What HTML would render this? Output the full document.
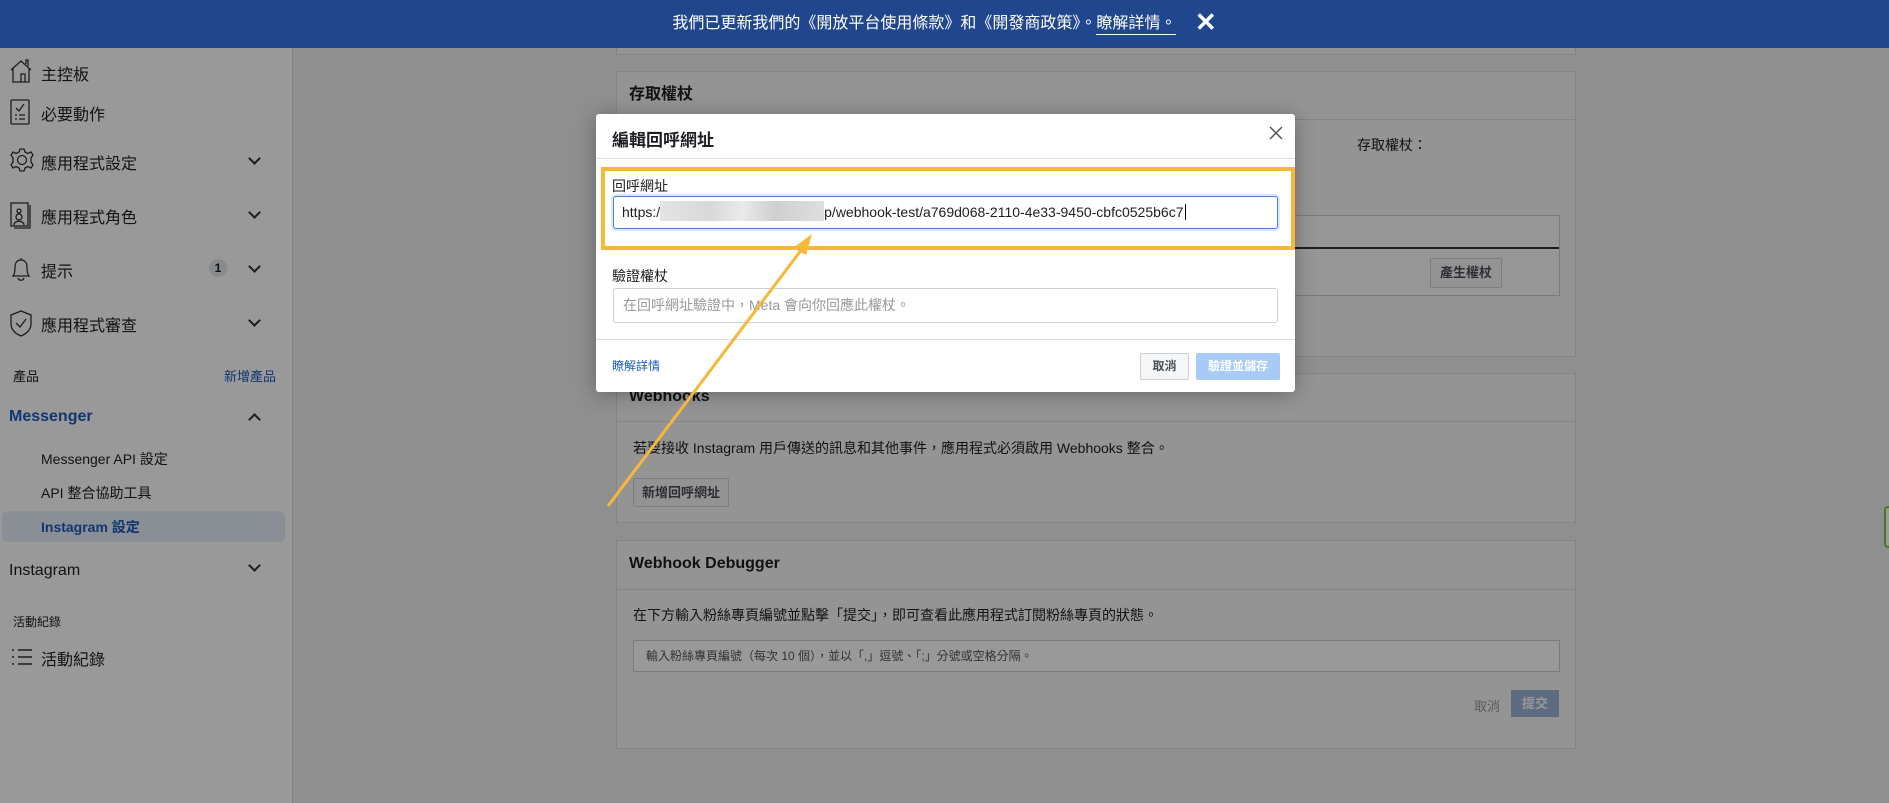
<!DOCTYPE html>
<html><head><meta charset="utf-8">
<style>
*{box-sizing:border-box;margin:0;padding:0}
body{width:1889px;height:803px;overflow:hidden;position:relative;background:#eeeeee;font-family:"Liberation Sans","Noto Sans CJK TC",sans-serif;color:#1c1e21}
.ab{position:absolute}
#banner{left:0;top:0;width:1889px;height:48px;background:#20478e;color:#fff;font-size:16px;text-align:center;line-height:44px;z-index:10}
#banner u{text-decoration:none;border-bottom:1px solid #fff;padding-bottom:2px}
#side{left:0;top:48px;width:293px;height:755px;background:#fff;border-right:1px solid #ddd}
.si{position:absolute;left:41px;font-size:16px;color:#1c1e21}
.chev{position:absolute;left:250px;width:9px;height:9px;border-right:2px solid #333;border-bottom:2px solid #333;transform:rotate(45deg)}
.ico{position:absolute;left:9px}
.card{position:absolute;left:616px;width:960px;background:#f7f7f7;border:1px solid #ddd}
.card h3{font-size:16px;font-weight:bold;padding:0 0 0 12px;height:48px;line-height:46px;border-bottom:1px solid #ddd;color:#1c1e21}
.btn{position:absolute;background:#f5f6f7;border:1px solid #ccd0d5;border-radius:2px;font-size:13px;font-weight:bold;color:#4b4f56;text-align:center}
#ov{left:0;top:48px;width:1889px;height:755px;background:rgba(0,0,0,.4);z-index:5}
#modal{left:596px;top:114px;width:699px;height:278px;background:#fff;border-radius:3px;z-index:6;box-shadow:0 2px 20px rgba(0,0,0,.3)}
.lbl{position:absolute;left:16px;font-size:14px;color:#1c1e21}
</style></head><body>
<div id="banner" class="ab">我們已更新我們的《開放平台使用條款》和《開發商政策》。<u>瞭解詳情。</u> <span style="font-size:26px;font-weight:bold;vertical-align:-3px;margin-left:14px">✕</span></div>

<div id="side" class="ab">
<svg class="ico" style="top:10px" width="24" height="26" viewBox="0 0 24 26" fill="none" stroke="#333" stroke-width="1.3"><path d="M2 12 L12 3 L22 12 M4 10 V24 H20 V10 M12 24 V16 H16 V24 M17 6 V2 H19 V8"/></svg>
<div class="si" style="top:13px">主控板</div>
<svg class="ico" style="top:51px" width="24" height="26" viewBox="0 0 24 26" fill="none" stroke="#333" stroke-width="1.3"><rect x="2" y="1" width="18" height="24" rx="1"/><path d="M7 9 L10 12 L15 5 M6 16 H8 M10 16 H16 M6 20 H8 M10 20 H16"/></svg>
<div class="si" style="top:53px">必要動作</div>
<svg class="ico" style="top:99px" width="26" height="26" viewBox="0 0 26 26" fill="none" stroke="#333" stroke-width="1.3"><circle cx="13" cy="13" r="4.5"/><path d="M11 2 H15 L16 5 L19 6.5 L22 5 L24 8 L22 11 V15 L24 18 L22 21 L19 19.5 L16 21 L15 24 H11 L10 21 L7 19.5 L4 21 L2 18 L4 15 V11 L2 8 L4 5 L7 6.5 L10 5 Z"/></svg>
<div class="si" style="top:102px">應用程式設定</div><div class="chev" style="top:106px"></div>
<svg class="ico" style="top:153px" width="24" height="28" viewBox="0 0 24 28" fill="none" stroke="#333" stroke-width="1.3"><rect x="2" y="2" width="17" height="23"/><path d="M21 4 V27 H5"/><circle cx="10" cy="10" r="2"/><circle cx="10" cy="16" r="3"/><path d="M5 24 C5 19 15 19 15 24"/></svg>
<div class="si" style="top:156px">應用程式角色</div><div class="chev" style="top:160px"></div>
<svg class="ico" style="top:208px" width="24" height="28" viewBox="0 0 24 28" fill="none" stroke="#333" stroke-width="1.3"><path d="M12 2 V4 M4 20 C6 18 6 14 6 11 C6 7 8 4 12 4 C16 4 18 7 18 11 C18 14 18 18 20 20 Z M9 22 C10 25 14 25 15 22"/></svg>
<div class="si" style="top:210px">提示</div>
<div class="ab" style="left:209px;top:211px;width:18px;height:18px;border-radius:9px;background:#e4e6eb;font-size:12px;font-weight:bold;text-align:center;line-height:18px">1</div>
<div class="chev" style="top:214px"></div>
<svg class="ico" style="top:261px" width="24" height="28" viewBox="0 0 24 28" fill="none" stroke="#333" stroke-width="1.3"><path d="M12 2 L22 6 V15 C22 21 17 25 12 27 C7 25 2 21 2 15 V6 Z M7 14 L11 18 L17 10"/></svg>
<div class="si" style="top:264px">應用程式審查</div><div class="chev" style="top:268px"></div>
<div class="ab" style="left:13px;top:318px;font-size:13px">產品</div>
<div class="ab" style="left:224px;top:318px;font-size:13px;color:#1d5bbf">新增產品</div>
<div class="ab" style="left:9px;top:360px;font-size:16px;font-weight:bold;color:#1d5bbf">Messenger</div>
<div class="chev" style="top:367px;transform:rotate(225deg)"></div>
<div class="ab" style="left:41px;top:401px;font-size:14px">Messenger API 設定</div>
<div class="ab" style="left:41px;top:435px;font-size:14px">API 整合協助工具</div>
<div class="ab" style="left:2px;top:463px;width:283px;height:31px;border-radius:6px;background:#e7eef8"></div>
<div class="ab" style="left:41px;top:469px;font-size:14px;font-weight:bold;color:#1d5bbf">Instagram 設定</div>
<div class="ab" style="left:9px;top:514px;font-size:16px">Instagram</div><div class="chev" style="top:513px"></div>
<div class="ab" style="left:13px;top:565px;font-size:12px">活動紀錄</div>
<svg class="ico" style="top:599px;left:11px" width="22" height="20" viewBox="0 0 22 20" stroke="#333" stroke-width="1.6"><path d="M1 3 H3 M1 10 H3 M1 17 H3 M7 3 H21 M7 10 H21 M7 17 H21"/></svg>
<div class="si" style="top:598px">活動紀錄</div>
</div>

<div class="card" style="top:20px;height:35px;border-top:none"></div>
<div class="card" style="top:71px;height:286px">
<h3>存取權杖</h3>
<div class="ab" style="left:740px;top:63px;font-size:14px">存取權杖：</div>
<div class="ab" style="left:16px;top:143px;width:927px;height:81px;border:1px solid #ccc;background:#fafafa"><div style="height:33px;border-bottom:2px solid #333"></div></div>
<div class="btn" style="left:813px;top:186px;width:72px;height:30px;line-height:28px">產生權杖</div>
</div>
<div class="card" style="top:373px;height:150px">
<h3>Webhooks</h3>
<div class="ab" style="left:16px;top:64px;font-size:14px">若要接收 Instagram 用戶傳送的訊息和其他事件，應用程式必須啟用 Webhooks 整合。</div>
<div class="btn" style="left:16px;top:104px;width:96px;height:29px;line-height:27px">新增回呼網址</div>
</div>
<div class="card" style="top:540px;height:209px">
<h3 style="height:49px">Webhook Debugger</h3>
<div class="ab" style="left:16px;top:64px;font-size:14px">在下方輸入粉絲專頁編號並點擊「提交」，即可查看此應用程式訂閱粉絲專頁的狀態。</div>
<div class="ab" style="left:16px;top:99px;width:927px;height:32px;border:1px solid #ccc;background:#fff;font-size:12px;color:#555;line-height:30px;padding-left:12px">輸入粉絲專頁編號（每次 10 個），並以「,」逗號、「;」分號或空格分隔。</div>
<div class="ab" style="left:857px;top:155px;font-size:13px;color:#999">取消</div>
<div class="ab" style="left:894px;top:149px;width:48px;height:27px;background:#9cb4d8;color:#fff;font-size:13px;font-weight:bold;text-align:center;line-height:27px">提交</div>
</div>
<div class="ab" style="left:1884px;top:506px;width:8px;height:42px;border:2px solid #7ec24a;border-radius:4px;background:#fff"></div>

<div id="ov" class="ab"></div>

<div id="modal" class="ab">
<div class="ab" style="left:16px;top:12px;font-size:17px;font-weight:bold">編輯回呼網址</div>
<svg class="ab" style="left:673px;top:12px" width="14" height="14" viewBox="0 0 14 14" stroke="#555" stroke-width="1.5"><path d="M1 1 L13 13 M13 1 L1 13"/></svg>
<div class="ab" style="left:0;top:44px;width:699px;height:1px;background:#dddfe2"></div>
<div class="lbl" style="top:62px">回呼網址</div>
<div class="ab" style="left:17px;top:82px;width:665px;height:33px;border:1px solid #4a7fd4;border-radius:3px;box-shadow:0 0 0 2px #dbe7fa;font-size:14px;line-height:31px;padding-left:8px;white-space:nowrap">https:/<span style="display:inline-block;width:164px;height:20px;vertical-align:-4px;background:linear-gradient(90deg,#e4e4e4,#d8d8d8 30%,#eaeaea 50%,#cfcfcf 70%,#dedede)"></span>p/webhook-test/a769d068-2110-4e33-9450-cbfc0525b6c7<span style="border-left:1px solid #000;margin-left:1px"></span></div>
<div class="lbl" style="top:152px">驗證權杖</div>
<div class="ab" style="left:17px;top:174px;width:665px;height:35px;border:1px solid #ccd0d5;border-radius:3px;font-size:14px;color:#999;line-height:33px;padding-left:9px">在回呼網址驗證中，Meta 會向你回應此權杖。</div>
<div class="ab" style="left:0;top:225px;width:699px;height:1px;background:#dddfe2"></div>
<div class="ab" style="left:16px;top:243px;font-size:12px;color:#1d5bbf">瞭解詳情</div>
<div class="btn" style="left:544px;top:239px;width:49px;height:27px;line-height:25px;font-size:12px">取消</div>
<div class="ab" style="left:600px;top:239px;width:84px;height:27px;background:#a7caf7;border-radius:2px;color:#fff;font-size:12px;font-weight:bold;text-align:center;line-height:27px">驗證並儲存</div>
</div>
<div class="ab" style="left:601px;top:167px;width:694px;height:83px;border:4px solid #f6b83a;z-index:7"></div>
<svg class="ab" style="left:0;top:0;z-index:8" width="1889" height="803"><line x1="608" y1="506" x2="805" y2="245" stroke="#f6b83a" stroke-width="3"/><path d="M812 234 L793 248 L806 255 Z" fill="#f6b83a"/></svg>
</body></html>
